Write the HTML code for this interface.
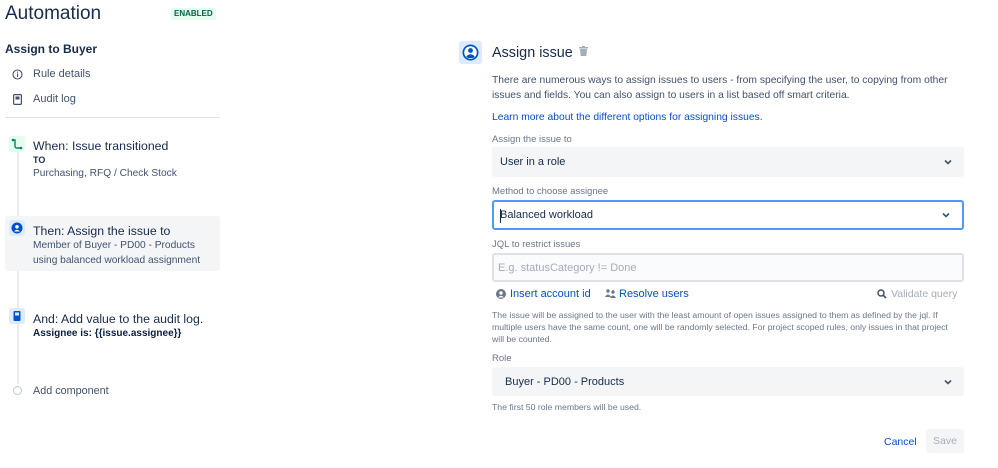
<!DOCTYPE html>
<html><head><meta charset="utf-8"><style>
*{margin:0;padding:0;box-sizing:border-box}
body{width:998px;height:468px;background:#fff;font-family:"Liberation Sans",sans-serif;color:#172b4d;position:relative;overflow:hidden}
.a{position:absolute;white-space:nowrap}
.lbl{font-size:9.5px;color:#6b778c}
.sel{position:absolute;left:492px;width:472px;border-radius:3px;background:#f4f5f7}
.chev{position:absolute;right:12px;top:50%;margin-top:-3px}
.ic{position:absolute;width:16px;height:16px;border-radius:3px}
</style></head><body>
<div class="a" style="left:5px;top:3px;font-size:19px;color:#172b4d">Automation</div>
<div class="a" style="left:171px;top:8px;height:12px;padding:0 3px;background:#e3fcef;color:#006644;font-size:8px;font-weight:bold;line-height:12px;border-radius:2px">ENABLED</div>
<div class="a" style="left:5px;top:42px;font-size:12px;font-weight:bold">Assign to Buyer</div>
<svg class="a" style="left:12px;top:69px" width="11" height="11" viewBox="0 0 11 11"><circle cx="5.5" cy="5.5" r="4.5" fill="none" stroke="#42526e" stroke-width="1.1"/><rect x="5" y="4.5" width="1.1" height="3.5" fill="#42526e"/><rect x="5" y="2.6" width="1.1" height="1.1" fill="#42526e"/></svg>
<div class="a" style="left:33px;top:68px;font-size:11px;color:#42526e">Rule details</div>
<svg class="a" style="left:13px;top:94px" width="9" height="11" viewBox="0 0 9 11"><rect x="0.6" y="0.6" width="7.8" height="9.8" rx="1" fill="none" stroke="#42526e" stroke-width="1.2"/><rect x="2.5" y="2.5" width="4" height="3" fill="#42526e"/></svg>
<div class="a" style="left:33px;top:93px;font-size:11px;color:#42526e">Audit log</div>
<div class="a" style="left:5px;top:117px;width:215px;height:1px;background:#dfe1e6"></div>
<div class="a" style="left:17px;top:152px;width:2px;height:232px;background:#ebecf0"></div>
<div class="ic" style="left:9px;top:136px;background:#e3fcef"><svg width="16" height="16" viewBox="0 0 16 16"><path d="M4 4 L6 4 L6 10 Q6 12 8 12 L12 12" fill="none" stroke="#00875a" stroke-width="1.4"/><circle cx="4" cy="4" r="1.3" fill="#00875a"/><circle cx="12" cy="12" r="1.3" fill="#00875a"/></svg></div>
<div class="a" style="left:33px;top:139px;font-size:12.3px">When: Issue transitioned</div>
<div class="a" style="left:33px;top:155px;font-size:9px;font-weight:bold">TO</div>
<div class="a" style="left:33px;top:168px;font-size:10.2px;color:#42526e">Purchasing, RFQ / Check Stock</div>
<div class="a" style="left:5px;top:216px;width:215px;height:55px;background:#f4f5f7;border-radius:3px"></div>
<div class="ic" style="left:9px;top:220px;background:#deebff"><svg width="16" height="16" viewBox="0 0 16 16"><circle cx="8" cy="8" r="5.5" fill="#0052cc"/><circle cx="8" cy="6.8" r="1.8" fill="#fff"/><path d="M5 11.5 Q8 8 11 11.5Z" fill="#fff"/></svg></div>
<div class="a" style="left:33px;top:224px;font-size:12.3px">Then: Assign the issue to</div>
<div class="a" style="left:33px;top:240px;font-size:10.2px;color:#42526e">Member of Buyer - PD00 - Products</div>
<div class="a" style="left:33px;top:255px;font-size:10.2px;color:#42526e">using balanced workload assignment</div>
<div class="ic" style="left:9px;top:308px;background:#deebff"><svg width="16" height="16" viewBox="0 0 16 16"><rect x="4.5" y="3" width="7" height="10" rx="1" fill="#0052cc"/><rect x="6" y="4.5" width="4" height="3" fill="#deebff"/></svg></div>
<div class="a" style="left:33px;top:312px;font-size:12.3px">And: Add value to the audit log.</div>
<div class="a" style="left:33px;top:328px;font-size:10px;font-weight:bold;color:#091e42">Assignee is: {{issue.assignee}}</div>
<div class="a" style="left:13px;top:386px;width:9px;height:9px;border:1px solid #c1c7d0;border-radius:50%;background:#fff"></div>
<div class="a" style="left:33px;top:385px;font-size:10.8px;color:#42526e">Add component</div>

<div class="a" style="left:459px;top:41px;width:23px;height:23px;background:#deebff;border-radius:3px"><svg width="23" height="23" viewBox="0 0 23 23"><circle cx="11.5" cy="11.5" r="8" fill="#0052cc"/><circle cx="11.5" cy="11.5" r="6.3" fill="#fff"/><circle cx="11.5" cy="9.5" r="2.4" fill="#0052cc"/><path d="M7.2 15.5 Q11.5 11 15.8 15.5 L14 17 L9 17Z" fill="#0052cc"/></svg></div>
<div class="a" style="left:492px;top:45px;font-size:14.4px">Assign issue</div>
<svg class="a" style="left:579px;top:46px" width="9" height="10" viewBox="0 0 9 10"><rect x="0" y="1" width="9" height="1.5" fill="#a5adba"/><rect x="3" y="0" width="3" height="1.5" fill="#a5adba"/><path d="M1 3 L8 3 L7.3 10 L1.7 10Z" fill="#a5adba"/></svg>
<div class="a" style="left:492px;top:73px;font-size:10.3px;line-height:15px;color:#42526e">There are numerous ways to assign issues to users - from specifying the user, to copying from other<br>issues and fields. You can also assign to users in a list based off smart criteria.</div>
<div class="a" style="left:492px;top:112px;font-size:10.3px;color:#0052cc">Learn more about the different options for assigning issues.</div>
<div class="a lbl" style="left:492px;top:134px">Assign the issue to</div>
<div class="sel" style="top:147px;height:30px"><div class="a" style="left:8px;top:9px;font-size:11px">User in a role</div><svg class="chev" width="8" height="6" viewBox="0 0 8 6"><path d="M1 1.5 L4 4.5 L7 1.5" fill="none" stroke="#42526e" stroke-width="1.6"/></svg></div>
<div class="a lbl" style="left:492px;top:186px">Method to choose assignee</div>
<div class="sel" style="top:200px;height:30px;background:#fff;border:2px solid #4c9aff"><div class="a" style="left:6px;top:7px;font-size:11px">Balanced workload</div><div class="a" style="left:6px;top:7px;width:1px;height:14px;background:#172b4d"></div><svg class="chev" width="8" height="6" viewBox="0 0 8 6"><path d="M1 1.5 L4 4.5 L7 1.5" fill="none" stroke="#42526e" stroke-width="1.6"/></svg></div>
<div class="a lbl" style="left:492px;top:239px">JQL to restrict issues</div>
<div class="sel" style="top:253px;height:29px;background:#fafbfc;border:2px solid #dfe1e6"><div class="a" style="left:4px;top:7px;font-size:11px;color:#a5adba">E.g. statusCategory != Done</div></div>
<svg class="a" style="left:496px;top:289px" width="10" height="10" viewBox="0 0 10 10"><circle cx="5" cy="5" r="5" fill="#6b778c"/><circle cx="5" cy="4" r="1.7" fill="#fff"/><path d="M2 8.5 Q5 5 8 8.5Z" fill="#fff"/></svg>
<div class="a" style="left:510px;top:288px;font-size:11px;color:#0052cc">Insert account id</div>
<svg class="a" style="left:605px;top:289px" width="11" height="9" viewBox="0 0 11 9"><circle cx="3" cy="2" r="1.7" fill="#6b778c"/><circle cx="8" cy="3" r="1.7" fill="#6b778c"/><path d="M0 8 Q3 3 6 8Z M5 9 Q8 4 11 9Z" fill="#6b778c"/></svg>
<div class="a" style="left:619px;top:288px;font-size:11px;color:#0052cc">Resolve users</div>
<svg class="a" style="left:877px;top:289px" width="10" height="10" viewBox="0 0 10 10"><circle cx="4" cy="4" r="3" fill="none" stroke="#42526e" stroke-width="1.5"/><path d="M6.3 6.3 L9 9" stroke="#42526e" stroke-width="1.6"/></svg>
<div class="a" style="left:891px;top:288px;font-size:10.5px;color:#a5adba">Validate query</div>
<div class="a" style="left:492px;top:309px;font-size:8.7px;line-height:12px;color:#6b778c">The issue will be assigned to the user with the least amount of open issues assigned to them as defined by the jql. If<br>multiple users have the same count, one will be randomly selected. For project scoped rules, only issues in that project<br>will be counted.</div>
<div class="a lbl" style="left:492px;top:353px">Role</div>
<div class="sel" style="top:367px;height:29px"><div class="a" style="left:13px;top:9px;font-size:11px">Buyer - PD00 - Products</div><svg class="chev" width="8" height="6" viewBox="0 0 8 6"><path d="M1 1.5 L4 4.5 L7 1.5" fill="none" stroke="#42526e" stroke-width="1.6"/></svg></div>
<div class="a" style="left:492px;top:402px;font-size:8.7px;color:#6b778c">The first 50 role members will be used.</div>
<div class="a" style="left:884px;top:436px;font-size:10.5px;color:#0052cc">Cancel</div>
<div class="a" style="left:926px;top:429px;width:38px;height:24px;background:#f4f5f7;border-radius:3px;font-size:10.5px;color:#a5adba;text-align:center;line-height:24px">Save</div>
</body></html>
